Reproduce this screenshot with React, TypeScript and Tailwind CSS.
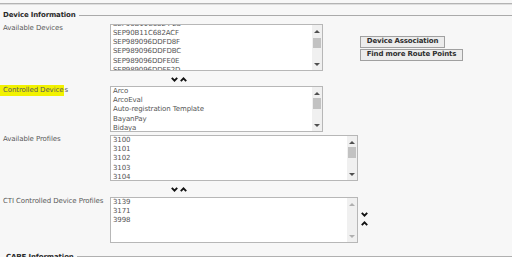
import React from "react";

type BoxProps = {
  w: string;
  h: string;
  items: string[];
  shift: string;
  thumbGap: string;
  thumb: boolean;
};

function UpTri({ c }: { c: string }) {
  return (
    <svg width="6" height="4" viewBox="0 0 6 4">
      <polygon points="0,4 3,1 6,4" fill={c} />
    </svg>
  );
}
function DownTri({ c }: { c: string }) {
  return (
    <svg width="6" height="4" viewBox="0 0 6 4">
      <polygon points="0,0 6,0 3,3" fill={c} />
    </svg>
  );
}

function ListBox({ w, h, items, shift, thumbGap, thumb }: BoxProps) {
  const arrow = thumb ? "#505050" : "#b0b0b0";
  return (
    <div className={`flex border border-[#b7b7b7] bg-white ${w} ${h}`}>
      <div className="flex-1 overflow-hidden pl-[2px]">
        <div className={shift}>
          {items.map((t) => (
            <div key={t} className="h-[9.2px] leading-[9.2px] whitespace-nowrap text-[#555555]">
              {t}
            </div>
          ))}
        </div>
      </div>
      <div className="w-[10px] bg-[#f0f0f0] flex flex-col">
        <div className="h-[11px] flex items-center justify-center">
          <UpTri c={arrow} />
        </div>
        {thumb && (
          <div className={`${thumbGap} mx-[1px] h-[10.5px] bg-[#c2c2c2]`} />
        )}
        <div className="flex-1" />
        <div className="h-[10px] flex items-center justify-center">
          <DownTri c={arrow} />
        </div>
      </div>
    </div>
  );
}

function ChevDown() {
  return (
    <svg width="7" height="5" viewBox="0 0 7 5">
      <polyline points="0.8,0.8 3.5,3.6 6.2,0.8" fill="none" stroke="#111" strokeWidth="1.9" />
    </svg>
  );
}
function ChevUp() {
  return (
    <svg width="7" height="5" viewBox="0 0 7 5">
      <polyline points="0.8,4.2 3.5,1.4 6.2,4.2" fill="none" stroke="#111" strokeWidth="1.9" />
    </svg>
  );
}

export default function App() {
  return (
    <div className="w-[512px] h-[257px] overflow-hidden bg-[#f7f7f7] font-['DejaVu_Sans',sans-serif] text-[7px] tracking-[-0.1px] text-[#5a5a5a]">
      <div className="h-[3px]" />
      <div className="h-px bg-[#b3b3b3]" />
      <div className="h-px bg-[#dedede]" />
      <div className="mt-[5px] h-[10px] flex items-center">
        <span className="pl-[3px] font-bold text-[#2a2a2a] tracking-[-0.15px]">Device Information</span>
        <div className="ml-[3px] flex-1 h-px bg-[#aaaaaa]" />
      </div>

      {/* Row 1 */}
      <div className="mt-[4px] flex">
        <div className="w-[110px] pl-[3px] leading-[9.2px]">Available Devices</div>
        <ListBox
          w="w-[213px]"
          h="h-[47px]"
          shift="mt-[-5.2px]"
          thumbGap="mt-[1.5px]"
          thumb
          items={[
            "SEP90B11C6824 2S",
            "SEP90B11C682ACF",
            "SEP989096DDFD8F",
            "SEP989096DDFDBC",
            "SEP989096DDFE0E",
            "SEP989096DDFE2D",
          ]}
        />
        <div className="ml-[37px] mt-[12px] flex flex-col items-start gap-[1px]">
          <button className="h-[11.5px] w-[85px] border border-[#a0a0a0] bg-[#ececec] text-[#2e2e2e] font-bold text-[7px] tracking-[-0.15px] leading-none flex items-center justify-center">
            Device Association
          </button>
          <button className="h-[12px] w-[103px] border border-[#a0a0a0] bg-[#ececec] text-[#2e2e2e] font-bold text-[7px] tracking-[-0.15px] leading-none flex items-center justify-center">
            Find more Route Points
          </button>
        </div>
      </div>

      <div className="h-[15px] flex items-center pl-[171px] gap-[2px] pt-[1px]">
        <ChevDown />
        <ChevUp />
      </div>

      {/* Row 2 */}
      <div className="flex">
        <div className="w-[110px] leading-[9.2px] flex items-start">
          <span className="inline-block bg-[#f2f200] pl-[3px] pr-[1px] h-[11px] leading-[11px] mt-[-1px]">Controlled Device</span>
          <span>s</span>
        </div>
        <ListBox
          w="w-[213px]"
          h="h-[46px]"
          shift="mt-[0px]"
          thumbGap="mt-[0px]"
          thumb
          items={["Arco", "ArcoEval", "Auto-registration Template", "BayanPay", "Bidaya"]}
        />
      </div>

      {/* Row 3 */}
      <div className="mt-[3px] flex">
        <div className="w-[110px] pl-[3px] leading-[9.2px]">Available Profiles</div>
        <ListBox
          w="w-[248px]"
          h="h-[46px]"
          shift="mt-[0px]"
          thumbGap="mt-[0px]"
          thumb
          items={["3100", "3101", "3102", "3103", "3104"]}
        />
      </div>

      <div className="h-[16px] flex items-center pl-[171px] gap-[2px] pt-[1px]">
        <ChevDown />
        <ChevUp />
      </div>

      {/* Row 4 */}
      <div className="flex">
        <div className="w-[110px] pl-[3px] leading-[9.2px] whitespace-nowrap">CTI Controlled Device Profiles</div>
        <ListBox
          w="w-[248px]"
          h="h-[46px]"
          shift="mt-[0px]"
          thumbGap="mt-[0px]"
          thumb={false}
          items={["3139", "3171", "3998"]}
        />
        <div className="ml-[3px] mt-[15px] flex flex-col gap-[4px]">
          <ChevDown />
          <ChevUp />
        </div>
      </div>

      <div className="mt-[9px] h-[10px] flex items-center">
        <div className="w-[4px] h-px bg-[#aaaaaa]" />
        <span className="pl-[2px] font-bold text-[#2a2a2a]">CAPF Information</span>
        <div className="ml-[3px] flex-1 h-[2px] bg-[#b0b0b0]" />
      </div>
    </div>
  );
}
